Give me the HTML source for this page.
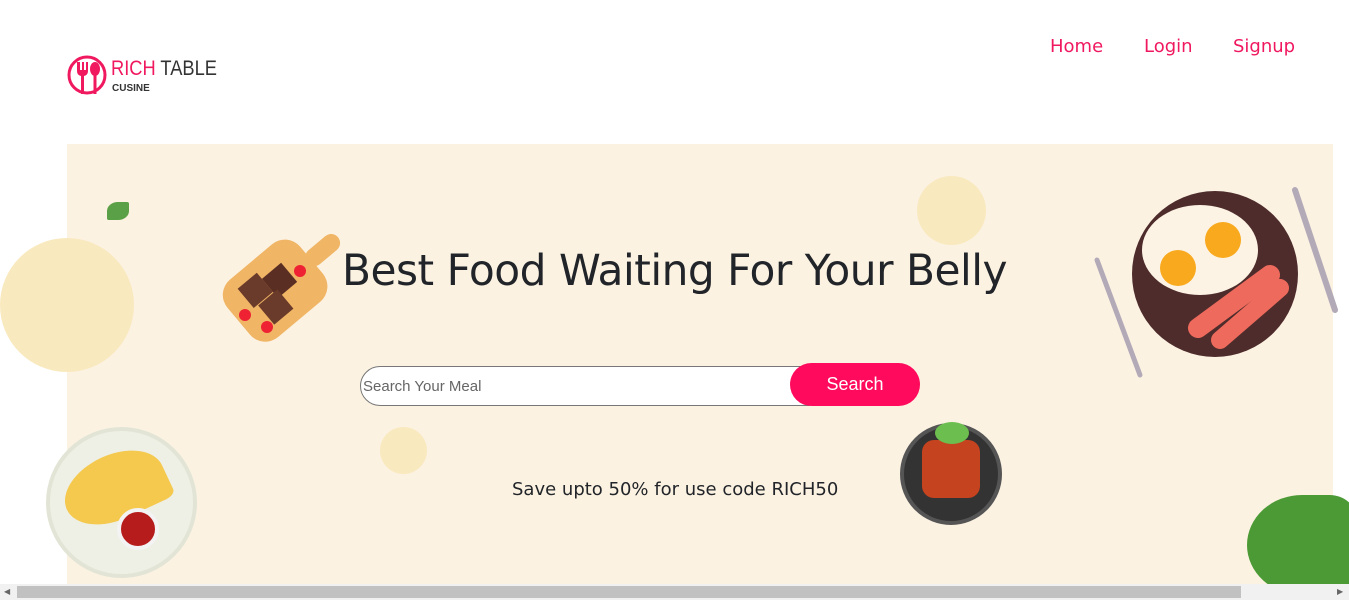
<!DOCTYPE html>
<html><head><meta charset="utf-8"><style>
*{margin:0;padding:0;box-sizing:border-box}
body{width:1349px;height:600px;overflow:hidden;background:#fff;font-family:"Liberation Sans",sans-serif;position:relative}
.a{position:absolute}
nav a{position:absolute;top:36px;color:#f0185f;text-decoration:none;font-family:"DejaVu Sans",sans-serif;font-size:18px}
.hero{left:67px;top:144px;width:1266px;height:440px;background:#fcf2e2}
</style></head><body>
<svg class="a" style="left:67px;top:52px" width="50" height="50" viewBox="0 0 50 50">
<circle cx="20" cy="23" r="18" fill="none" stroke="#f0185f" stroke-width="3"/>
<path d="M10 10v9q0 4 4 5v18h3V24q4-1 4-5v-9h-2v8h-2v-8h-2v8h-2v-8z" fill="#f0185f"/>
<ellipse cx="28" cy="17" rx="5" ry="7" fill="#f0185f"/><rect x="26.5" y="20" width="3" height="22" fill="#f0185f"/>
</svg>
<div class="a" style="left:111px;top:57px;font-size:21px;transform:scaleX(0.87);transform-origin:left;white-space:nowrap"><span style="color:#f0185f">RICH</span> <span style="color:#333">TABLE</span></div>
<div class="a" style="left:112px;top:83px;font-size:10px;font-weight:bold;color:#333">CUSINE</div>
<nav><a style="left:1050px">Home</a><a style="left:1144px">Login</a><a style="left:1233px">Signup</a></nav>
<div class="a hero"></div>
<div class="a" style="left:0;top:238px;width:134px;height:134px;border-radius:50%;background:#f9e9bf"></div>
<div class="a" style="left:917px;top:176px;width:69px;height:69px;border-radius:50%;background:#f9e9bf"></div>
<div class="a" style="left:380px;top:427px;width:47px;height:47px;border-radius:50%;background:#f9e9bf"></div>
<div class="a" style="left:107px;top:202px;width:22px;height:18px;border-radius:50% 10% 50% 10%;background:#5aa046"></div>
<svg class="a" style="left:205px;top:205px" width="160" height="155" viewBox="0 0 160 155">
<g transform="rotate(-40 80 78)"><rect x="20" y="40" width="95" height="75" rx="20" fill="#f0b565"/><rect x="110" y="68" width="40" height="18" rx="9" fill="#f0b565"/>
<rect x="40" y="52" width="25" height="25" fill="#6a3a2a"/><rect x="65" y="60" width="25" height="25" fill="#5a2e22"/><rect x="45" y="78" width="25" height="25" fill="#6a3a2a"/></g>
<circle cx="40" cy="110" r="6" fill="#e23"/><circle cx="62" cy="122" r="6" fill="#e23"/><circle cx="95" cy="66" r="6" fill="#e23"/></svg>
<div class="a" style="left:0;width:1349px;top:246px;text-align:center;font-size:42.3px;color:#212529;font-family:'DejaVu Sans',sans-serif;letter-spacing:-0.5px">Best Food Waiting For Your Belly</div>
<div class="a" style="left:360px;top:366px;width:450px;height:40px;border:1px solid #777;border-radius:20px 0 0 20px;background:#fff;font-size:15px;color:#666;padding:11px 0 0 2px">Search Your Meal</div>
<div class="a" style="left:790px;top:363px;width:130px;height:43px;border-radius:22px;background:#ff0a5c;color:#fff;font-size:18px;text-align:center;line-height:43px">Search</div>
<div class="a" style="left:512px;top:479px;font-size:18px;color:#212529;font-family:'DejaVu Sans',sans-serif;white-space:nowrap">Save upto 50% for use code RICH50</div>
<svg class="a" style="left:1080px;top:180px" width="269" height="210" viewBox="0 0 269 210">
<line x1="17" y1="80" x2="60" y2="195" stroke="#b3aab8" stroke-width="5" stroke-linecap="round"/>
<line x1="215" y1="10" x2="255" y2="130" stroke="#b3aab8" stroke-width="6" stroke-linecap="round"/>
<circle cx="135" cy="94" r="83" fill="#4e2c2c"/>
<ellipse cx="120" cy="70" rx="58" ry="45" fill="#fdf3e4"/>
<circle cx="98" cy="88" r="18" fill="#f8a91e"/><circle cx="143" cy="60" r="18" fill="#f8a91e"/>
<path d="M118 148 L190 95" stroke="#ee6a5c" stroke-width="20" stroke-linecap="round"/><path d="M140 160 L200 108" stroke="#ee6a5c" stroke-width="18" stroke-linecap="round"/>
</svg>
<div class="a" style="left:900px;top:423px;width:102px;height:102px;border-radius:50%;background:#333;border:4px solid #555"></div>
<div class="a" style="left:922px;top:440px;width:58px;height:58px;border-radius:12px;background:#c5431f"></div>
<div class="a" style="left:935px;top:422px;width:34px;height:22px;border-radius:50%;background:#6cbf4f"></div>
<div class="a" style="left:46px;top:427px;width:151px;height:151px;border-radius:50%;background:#eef0e6;border:4px solid #e2e5d6"></div>
<div class="a" style="left:62px;top:455px;width:105px;height:65px;border-radius:50% 50% 10% 50%;background:#f5c84e;transform:rotate(-25deg)"></div>
<div class="a" style="left:117px;top:508px;width:42px;height:42px;border-radius:50%;background:#b71c1c;border:4px solid #f3f3f3"></div>
<div class="a" style="left:1247px;top:495px;width:110px;height:100px;border-radius:60% 30% 0 60%;background:#4c9a36"></div>
<div class="a" style="left:0;top:584px;width:1349px;height:16px;background:#f1f1f1"></div>
<div class="a" style="left:17px;top:586px;width:1224px;height:12px;background:#c1c1c1"></div>
<div class="a" style="left:4px;top:587px;font-size:8px;color:#666">◀</div>
<div class="a" style="left:1337px;top:587px;font-size:8px;color:#666">▶</div>
</body></html>
